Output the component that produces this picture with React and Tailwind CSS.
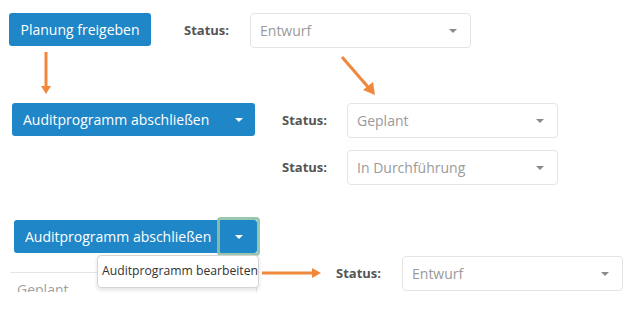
import React from 'react';

// Workflow diagram — status transitions for audit program buttons.

const font = { fontFamily: '"Open Sans", "Noto Sans", sans-serif' };

function Caret({ className = 'border-t-[#8a8a8a]' }) {
  return (
    <span
      className={`inline-block h-0 w-0 border-x-[4px] border-t-[4px] border-x-transparent ${className}`}
    />
  );
}

function StatusField({ value, width = 'w-[211px]', labelGap = 'mr-[20px]' }) {
  return (
    <div className="flex items-start">
      <span className={`pt-[8px] text-[13px] font-bold leading-[18px] text-[#555] ${labelGap}`}>Status:</span>
      <div
        className={`flex h-[35px] items-center justify-between rounded-[4px] border border-[#e4e4e4] bg-white pl-[9px] pr-[13px] ${width}`}
      >
        <span className="text-[14px] text-[#9a9a9a]">{value}</span>
        <Caret />
      </div>
    </div>
  );
}

function BlueButton({ children, className = '' }) {
  return (
    <button
      className={`flex h-[33px] items-center rounded-[3px] bg-[#1f86c7] text-[14px] text-white ${className}`}
    >
      {children}
    </button>
  );
}

function Arrows() {
  const c = '#f0873a';
  return (
    <svg className="pointer-events-none absolute left-0 top-0" width="639" height="318">
      {/* down */}
      <line x1="46" y1="52" x2="46" y2="86" stroke={c} strokeWidth="3" />
      <polygon points="41,86 51,86 46,94" fill={c} />
      {/* diagonal */}
      <line x1="342" y1="57" x2="368" y2="87" stroke={c} strokeWidth="3" />
      <polygon points="363,90 373,82 375,95" fill={c} />
      {/* right */}
      <line x1="262" y1="273" x2="312" y2="273" stroke={c} strokeWidth="3" />
      <polygon points="312,268 312,278 321,273" fill={c} />
    </svg>
  );
}

export default function App() {
  return (
    <div className="relative h-[318px] w-[639px] overflow-hidden bg-white" style={font}>
      {/* ── row 1 ── */}
      <div className="flex items-start pl-[9px] pt-[13px]">
        <BlueButton className="w-[142px] justify-center">Planung freigeben</BlueButton>
        <div className="ml-[33px]">
          <StatusField value="Entwurf" width="w-[221px]" labelGap="mr-[21px]" />
        </div>
      </div>

      {/* ── row 2 / 3 ── */}
      <div className="mt-[55px] flex items-start pl-[12px]">
        <BlueButton className="w-[243px] justify-between pl-[11px] pr-[12px]">
          <span>Auditprogramm abschließen</span>
          <Caret className="border-t-white" />
        </BlueButton>
        <div className="ml-[27px] flex flex-col gap-[12px]">
          <StatusField value="Geplant" />
          <StatusField value="In Durchführung" />
        </div>
      </div>

      {/* ── row 4 ── */}
      <div className="relative mt-[35px] pl-[14px]">
        <div className="flex h-[33px] w-[243px]">
          <div className="flex flex-1 items-center rounded-l-[3px] bg-[#1f86c7] pl-[11px] text-[14px] text-white">
            Auditprogramm abschließen
          </div>
          <div className="relative flex w-[37px] items-center justify-center rounded-r-[3px] bg-[#1f86c7]">
            <span className="absolute -inset-[3px] rounded-[4px] border-[3px] border-[#8cc2a6]/90" />
            <Caret className="border-t-white" />
          </div>
        </div>

        {/* clipped field behind the menu */}
        <div className="ml-[-4px] mt-[19px] h-[20px] w-[247px] overflow-hidden">
          <div className="flex h-[35px] items-start justify-between border-r border-t border-[#e6e6e6] pl-[7px] pr-[14px] pt-[8px]">
            <span className="text-[14px] leading-[18px] text-[#a0a0a0]">Geplant</span>
            <span className="mt-[9px]"><Caret /></span>
          </div>
        </div>

        {/* dropdown menu */}
        <div className="absolute left-[97px] top-[35px] flex h-[33px] w-[162px] items-center whitespace-nowrap rounded-[4px] border border-[#d4d4d4] bg-white pl-[4px] text-[12.2px] text-[#333] shadow-[0_2px_4px_rgba(0,0,0,0.12)]">
          Auditprogramm bearbeiten
        </div>

        {/* status on the right */}
        <div className="absolute left-[336px] top-[36px]">
          <StatusField value="Entwurf" width="w-[221px]" labelGap="mr-[21px]" />
        </div>
      </div>

      <Arrows />
    </div>
  );
}
